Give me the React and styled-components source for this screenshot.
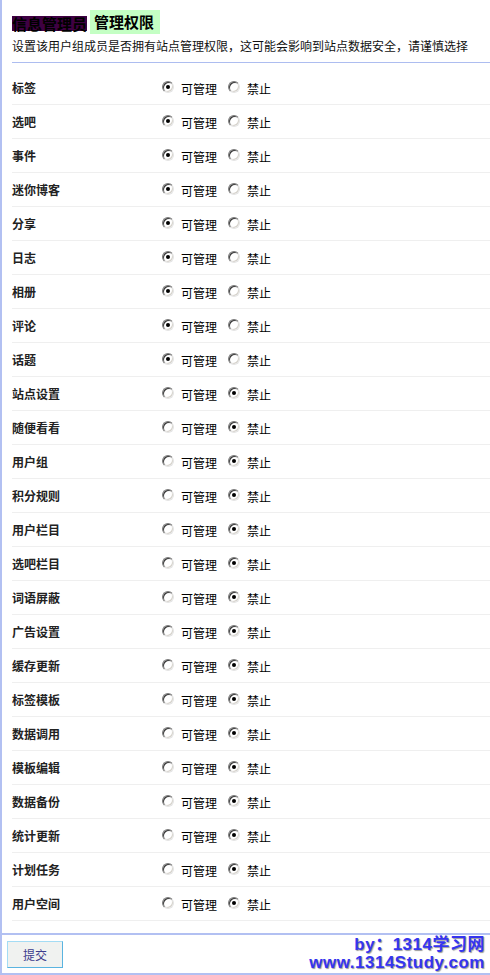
import React from 'react';
import styled, { createGlobalStyle } from 'styled-components';

const GlobalStyle = createGlobalStyle`
  html, body {
    margin: 0;
    padding: 0;
    background: #fff;
  }
  body {
    font-family: "Noto Sans CJK SC", "Liberation Sans", sans-serif;
    font-size: 12px;
    color: #000;
  }
`;

const Frame = styled.div`
  width: 488px;
  height: 973px;
  border-left: 2px solid #b2c0f2;
  border-bottom: 2px solid #b2c0f2;
  display: flex;
  flex-direction: column;
`;

const Header = styled.div`
  padding: 10px 0 0 10px;
`;

const TitleRow = styled.div`
  display: flex;
  align-items: center;
  gap: 3px;
  height: 24px;
`;

const RoleName = styled.span`
  background: #3f0042;
  font-size: 15px;
  font-weight: bold;
  line-height: 15px;
  height: 15px;
  margin-top: 2px;
  color: #000;
`;

const SectionTitle = styled.span`
  background: #c4ffc4;
  font-size: 15px;
  font-weight: bold;
  line-height: 24px;
  padding: 0 6px 0 4px;
`;

const Description = styled.p`
  margin: 4px 0 0;
  font-size: 12px;
  line-height: 16px;
  white-space: nowrap;
  color: #111;
`;

const Divider = styled.div`
  margin: 8px 0 0 10px;
  height: 1px;
  background: #adbdf0;
`;

const List = styled.div`
  margin: 8px 0 0 10px;
`;

const Row = styled.div`
  display: flex;
  align-items: center;
  height: 33px;
  border-bottom: 1px solid #efefef;
`;

const Label = styled.div`
  width: 150px;
  font-weight: bold;
  color: #222;
  font-size: 12px;
`;

const Option = styled.label`
  display: flex;
  align-items: center;
  margin-right: 11px;
  font-size: 12px;
`;

const Radio = styled.span`
  box-sizing: border-box;
  width: 12px;
  height: 12px;
  border-radius: 50%;
  border: 1px solid;
  border-color: #7a7a7a #e4e4e4 #e4e4e4 #7a7a7a;
  box-shadow: inset 1px 1px 0 #3a3a3a, inset -1px -1px 0 #d6d3cc;
  background: #fff;
  margin: -2px 7px 0 0;
  display: flex;
  align-items: center;
  justify-content: center;

  &::after {
    content: '';
    width: 4px;
    height: 4px;
    border-radius: 50%;
    background: ${(p) => (p.$checked ? '#000' : 'transparent')};
  }
`;

const OptionText = styled.span`
  line-height: 14px;
  margin-top: 2px;
`;

const Footer = styled.div`
  margin-top: 12px;
  border-top: 2px solid #b2c0f2;
  flex: 1;
  display: flex;
  justify-content: space-between;
  padding: 6px 5px 0 5px;
`;

const SubmitButton = styled.button`
  width: 56px;
  height: 27px;
  background: #f0f2f0;
  border: 1px solid;
  border-color: #a4dcf4 #5ab4e0 #5ab4e0 #a4dcf4;
  color: #3c3c8c;
  font-family: "Noto Sans CJK SC", sans-serif;
  font-size: 12px;
  padding: 0;
`;

const Watermark = styled.div`
  margin-top: -5px;
  text-align: right;
  font-family: "Liberation Sans", "Noto Sans CJK SC", sans-serif;
  font-weight: bold;
  font-size: 17px;
  letter-spacing: 0.5px;
  color: #3535f0;
  text-shadow: 1px 1px 1px #9a9a9a;
`;

const WatermarkLine = styled.div`
  line-height: 18px;
  height: 18px;
`;

const permissions = [
  ['标签', true],
  ['选吧', true],
  ['事件', true],
  ['迷你博客', true],
  ['分享', true],
  ['日志', true],
  ['相册', true],
  ['评论', true],
  ['话题', true],
  ['站点设置', false],
  ['随便看看', false],
  ['用户组', false],
  ['积分规则', false],
  ['用户栏目', false],
  ['选吧栏目', false],
  ['词语屏蔽', false],
  ['广告设置', false],
  ['缓存更新', false],
  ['标签模板', false],
  ['数据调用', false],
  ['模板编辑', false],
  ['数据备份', false],
  ['统计更新', false],
  ['计划任务', false],
  ['用户空间', false],
];

function PermissionRow({ name, allowed }) {
  return (
    <Row>
      <Label>{name}</Label>
      <Option>
        <Radio $checked={allowed} />
        <OptionText>可管理</OptionText>
      </Option>
      <Option>
        <Radio $checked={!allowed} />
        <OptionText>禁止</OptionText>
      </Option>
    </Row>
  );
}

export default function App() {
  return (
    <>
      <GlobalStyle />
      <Frame>
        <Header>
          <TitleRow>
            <RoleName>信息管理员</RoleName>
            <SectionTitle>管理权限</SectionTitle>
          </TitleRow>
          <Description>
            设置该用户组成员是否拥有站点管理权限，这可能会影响到站点数据安全，请谨慎选择
          </Description>
        </Header>
        <Divider />
        <List>
          {permissions.map(([name, allowed]) => (
            <PermissionRow key={name} name={name} allowed={allowed} />
          ))}
        </List>
        <Footer>
          <SubmitButton>提交</SubmitButton>
          <Watermark>
            <WatermarkLine>by：1314学习网</WatermarkLine>
            <WatermarkLine>www.1314Study.com</WatermarkLine>
          </Watermark>
        </Footer>
      </Frame>
    </>
  );
}
